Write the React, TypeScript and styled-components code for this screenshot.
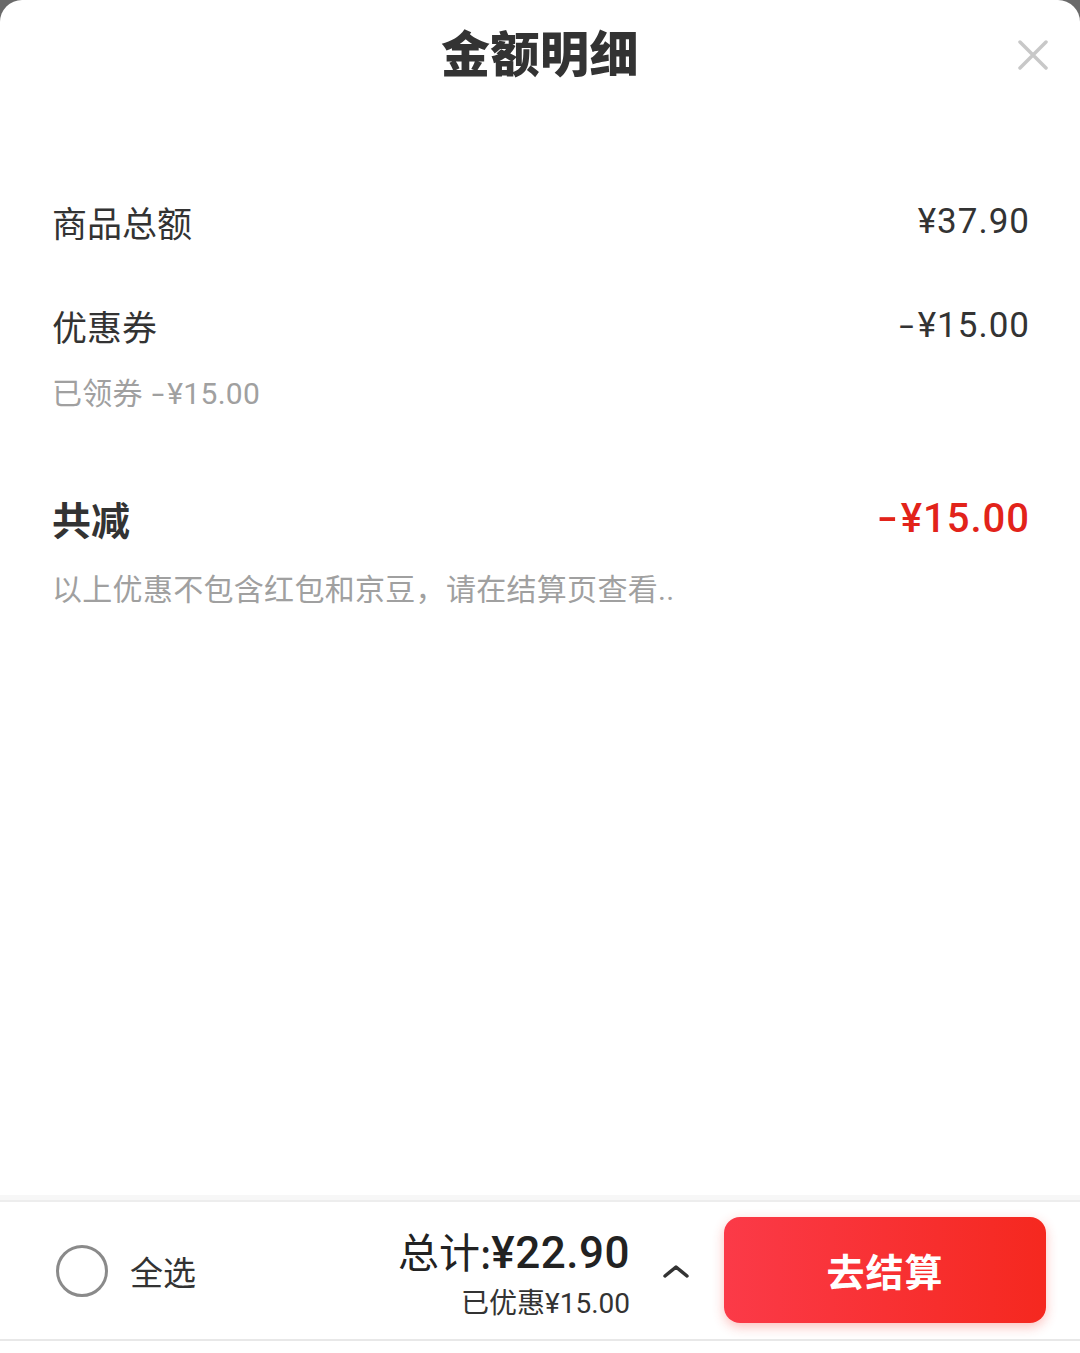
import React from "react";
import styled, { createGlobalStyle } from "styled-components";

const Global = createGlobalStyle`
  html, body { margin: 0; padding: 0; background: #6a6a6a; }
  body { font-family: Roboto, "Noto Sans CJK SC", "Noto Sans", sans-serif; }
  * { box-sizing: border-box; }
`;

const Sheet = styled.div`
  width: 1080px;
  height: 1353px;
  background: #ffffff;
  border-radius: 22px 22px 0 0;
  display: flex;
  flex-direction: column;
  overflow: hidden;
`;

const Header = styled.div`
  display: grid;
  grid-template-columns: 1fr auto 1fr;
  align-items: center;
  padding-top: 20px;
  height: 82px;
`;

const Title = styled.h1`
  grid-column: 2;
  margin: 0;
  font-family: "Noto Sans CJK SC", sans-serif;
  font-size: 49px;
  line-height: 62px;
  font-weight: 900;
  color: #333333;
  letter-spacing: 0.5px;
`;

const Close = styled.button`
  grid-column: 3;
  justify-self: end;
  margin: 8px 30px 0 0;
  width: 34px;
  height: 34px;
  padding: 0;
  border: none;
  background: transparent;
  display: flex;
  align-items: center;
  justify-content: center;
`;

const Content = styled.div`
  flex: 1;
  padding: 0 50px 0 52px;
  display: flex;
  flex-direction: column;
`;

const Row = styled.div<{ $mt: number; $lh: number }>`
  display: flex;
  justify-content: space-between;
  align-items: center;
  margin-top: ${(p) => p.$mt}px;
  height: ${(p) => p.$lh}px;
`;

const Label = styled.span<{ $bold?: boolean }>`
  font-family: "Noto Sans CJK SC", sans-serif;
  font-size: ${(p) => (p.$bold ? 39 : 35)}px;
  font-weight: ${(p) => (p.$bold ? 700 : 400)};
  color: #333333;
`;

const Amount = styled.span<{ $red?: boolean }>`
  font-family: Roboto, "Noto Sans CJK SC", sans-serif;
  font-size: ${(p) => (p.$red ? 40 : 35)}px;
  font-weight: ${(p) => (p.$red ? 500 : 400)};
  color: ${(p) => (p.$red ? "#e2231a" : "#333333")};
  letter-spacing: 1px;
`;

const Dash = styled.span`
  display: inline-block;
  transform: scaleX(1.5);
  margin: 0 5px 0 3px;
`;

const Note = styled.div<{ $mt: number }>`
  margin-top: ${(p) => p.$mt}px;
  line-height: 42px;
  font-family: Roboto, "Noto Sans CJK SC", sans-serif;
  font-size: 30px;
  color: #a0a0a0;
  letter-spacing: 0.3px;
`;

const Bar = styled.div`
  height: 158px;
  background: #ffffff;
  border-top: 5px solid #f7f7f7;
  display: flex;
  flex-direction: column;
`;

const BarInner = styled.div`
  height: 141px;
  border-top: 2px solid #ededed;
  border-bottom: 2px solid #e8e8e8;
  display: flex;
  align-items: center;
  padding: 0 34px 0 56px;
`;

const Check = styled.span`
  width: 52px;
  height: 52px;
  border-radius: 50%;
  border: 3px solid #8a8a8a;
  flex-shrink: 0;
`;

const CheckLabel = styled.span`
  margin-left: 22px;
  font-family: "Noto Sans CJK SC", sans-serif;
  font-size: 33px;
  color: #333333;
`;

const Totals = styled.div`
  margin-left: auto;
  margin-top: 4px;
  display: flex;
  flex-direction: column;
  align-items: flex-end;
`;

const TotalLine = styled.div`
  font-family: "Noto Sans CJK SC", sans-serif;
  font-size: 41px;
  line-height: 50px;
  color: #222222;
  display: flex;
  align-items: baseline;
`;

const TotalNum = styled.span`
  font-family: Roboto, sans-serif;
  font-size: 44px;
  font-weight: 500;
  color: #222222;
  letter-spacing: 0.5px;
`;

const Saved = styled.div`
  margin-top: 10px;
  font-family: Roboto, "Noto Sans CJK SC", sans-serif;
  font-size: 28px;
  line-height: 32px;
  color: #333333;
`;

const Chevron = styled.span`
  margin: 0 34px 0 32px;
  display: flex;
  align-items: center;
`;

const Checkout = styled.button`
  width: 322px;
  height: 106px;
  margin-top: -2px;
  border: none;
  border-radius: 16px;
  background: linear-gradient(90deg, #fb3a48 0%, #f5281f 100%);
  box-shadow: 0 4px 12px rgba(245, 50, 40, 0.3);
  color: #ffffff;
  font-family: "Noto Sans CJK SC", sans-serif;
  font-size: 38px;
  font-weight: 700;
  letter-spacing: 1px;
`;

export default function App() {
  return (
    <>
      <Global />
      <Sheet>
        <Header>
          <Title>金额明细</Title>
          <Close aria-label="close">
            <svg width="30" height="30" viewBox="0 0 30 30">
              <path d="M2 2 L28 28 M28 2 L2 28" stroke="#c8c8c8" strokeWidth="3.5" strokeLinecap="round" />
            </svg>
          </Close>
        </Header>
        <Content>
          <Row $mt={115} $lh={48}>
            <Label>商品总额</Label>
            <Amount>¥37.90</Amount>
          </Row>
          <Row $mt={56} $lh={48}>
            <Label>优惠券</Label>
            <Amount><Dash>-</Dash>¥15.00</Amount>
          </Row>
          <Note $mt={24}>已领券 <Dash>-</Dash>¥15.00</Note>
          <Row $mt={78} $lh={50}>
            <Label $bold>共减</Label>
            <Amount $red><Dash>-</Dash>¥15.00</Amount>
          </Row>
          <Note $mt={26}>以上优惠不包含红包和京豆，请在结算页查看..</Note>
        </Content>
        <Bar>
          <BarInner>
            <Check />
            <CheckLabel>全选</CheckLabel>
            <Totals>
              <TotalLine>
                总计:<TotalNum>¥22.90</TotalNum>
              </TotalLine>
              <Saved>已优惠¥15.00</Saved>
            </Totals>
            <Chevron>
              <svg width="28" height="16" viewBox="0 0 28 16">
                <path d="M3 13 L14 4 L25 13" fill="none" stroke="#333" strokeWidth="3.5" strokeLinecap="round" strokeLinejoin="round" />
              </svg>
            </Chevron>
            <Checkout>去结算</Checkout>
          </BarInner>
        </Bar>
      </Sheet>
    </>
  );
}
